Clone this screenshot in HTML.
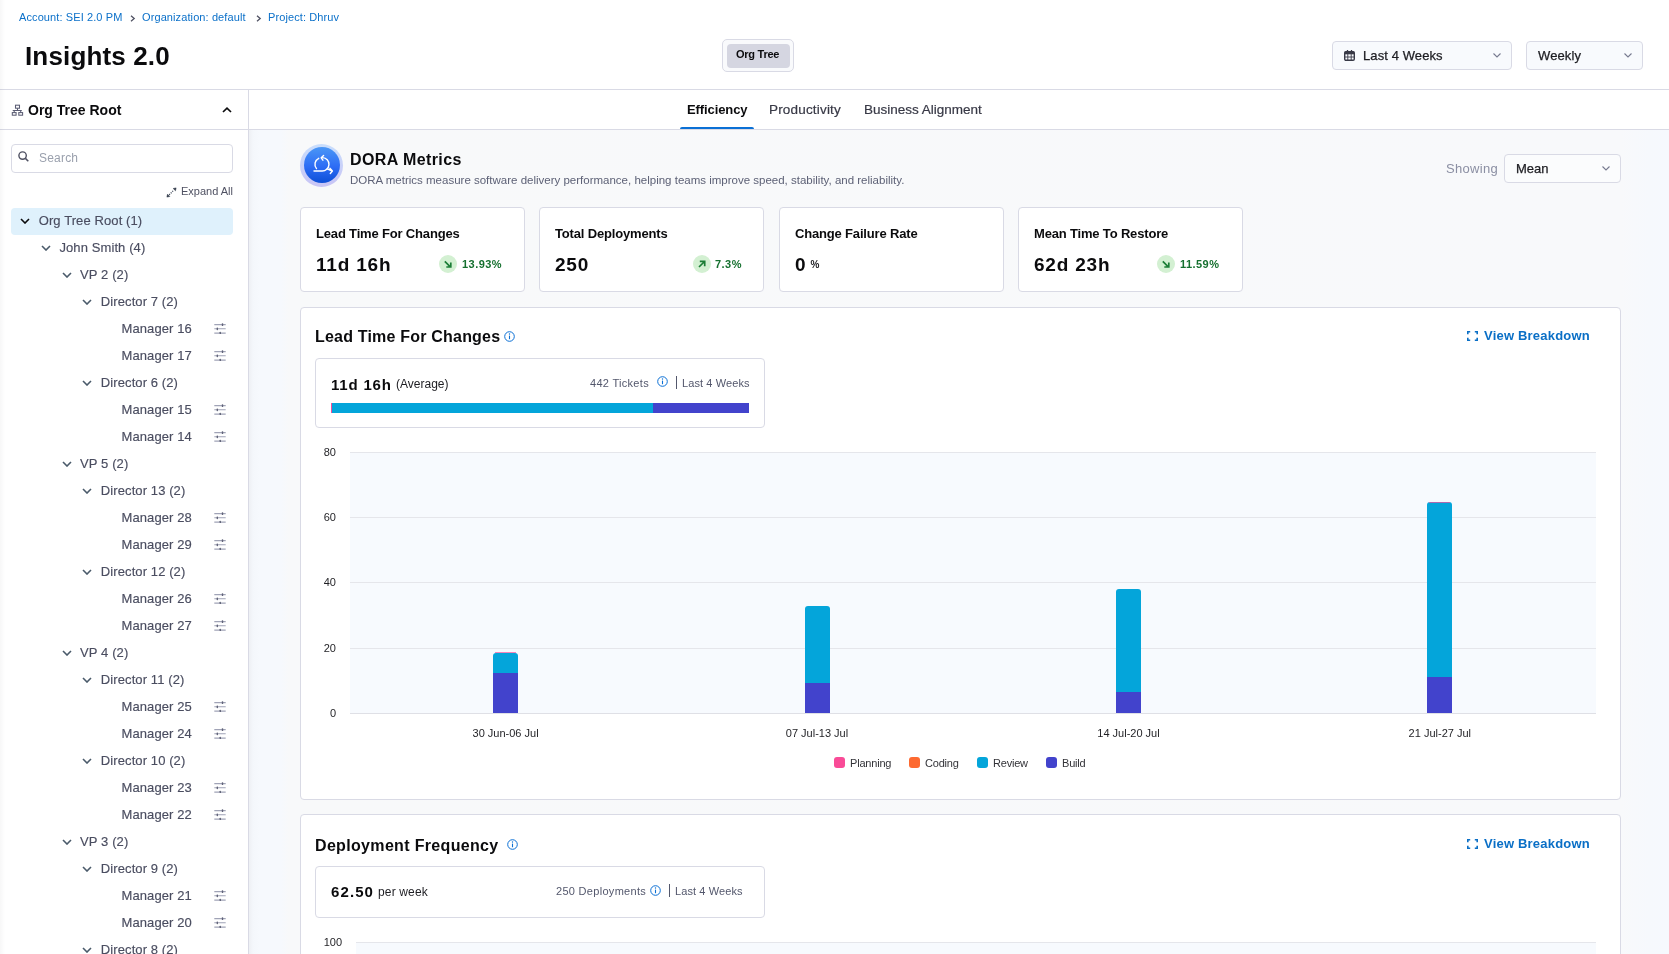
<!DOCTYPE html>
<html><head><meta charset="utf-8">
<style>
*{box-sizing:border-box;margin:0;padding:0}
html{width:1669px;height:954px;overflow:hidden;background:#fff}
body{will-change:transform;width:1669px;height:954px;overflow:hidden;background:#fff;font-family:"Liberation Sans",sans-serif;color:#0b0b0d}
.a{position:absolute;white-space:nowrap}
.bc{font-size:11px;color:#0b70c9;top:11px;letter-spacing:.1px}
.hl{position:absolute;left:0;width:1669px;height:1px;background:#d9dae5}
#side{position:absolute;left:0;top:90px;width:249px;height:864px;border-right:1px solid #d9dae5;background:#fff;overflow:hidden}
.tr{position:absolute;font-size:13px;color:#4a4d60;-webkit-text-stroke:.15px #4a4d60;height:27px;line-height:27px;white-space:nowrap}
.chev{position:absolute;top:11px;width:10px;height:6px}
.sl{position:absolute;left:214px;width:12px;height:11px}
#main{position:absolute;left:249px;top:130px;width:1420px;height:824px;background:linear-gradient(90deg,#eef0f4 0px,#f4f7fb 4px,#f6f9fd 10px,#f6f9fd 32px,#f8f9fa 40px,#f8f9fb 1372px,#f6f9fd 1400px,#f6f9fe 1420px)}
.card{position:absolute;background:#fff;border:1px solid #d9dae5;border-radius:4px}
.mc-t{position:absolute;left:15px;top:18px;font-size:13px;font-weight:bold;color:#0b0b0d;letter-spacing:-.17px}
.mc-v{position:absolute;left:15px;top:46px;font-size:19px;font-weight:bold;color:#0b0b0d;letter-spacing:.8px}
.badge{position:absolute;top:47px;width:18px;height:18px;border-radius:50%;background:#d3f0d2}
.pct{position:absolute;top:49.5px;font-size:11px;font-weight:bold;color:#15702f;letter-spacing:.45px}
.ctitle{position:absolute;font-size:16px;font-weight:bold;color:#0b0b0d;letter-spacing:.2px}
.vb{position:absolute;font-size:13px;font-weight:bold;color:#0a6fc6;letter-spacing:.2px}
.grey11{font-size:11px;color:#53576c;letter-spacing:.3px}
.ylab{position:absolute;font-size:11px;color:#1f1f23;text-align:right;width:30px}
.xlab{position:absolute;font-size:11px;color:#1f1f23;text-align:center;width:120px}
.grid{position:absolute;height:1px;background:#e5e6eb}
.lg{position:absolute;top:757px;width:11px;height:11px;border-radius:3px}
.lgt{position:absolute;top:757px;font-size:11px;color:#333338;letter-spacing:-.2px}
</style></head><body>
<!-- ===== header ===== -->
<div class="a bc" style="left:19px">Account: SEI 2.0 PM</div>
<svg class="a" style="left:130px;top:15px" width="6" height="7" viewBox="0 0 6 7"><path d="M1 0.8L4.2 3.5L1 6.2" fill="none" stroke="#4f5162" stroke-width="1.3"/></svg>
<div class="a bc" style="left:142px">Organization: default</div>
<svg class="a" style="left:256px;top:15px" width="6" height="7" viewBox="0 0 6 7"><path d="M1 0.8L4.2 3.5L1 6.2" fill="none" stroke="#4f5162" stroke-width="1.3"/></svg>
<div class="a bc" style="left:268px">Project: Dhruv</div>
<div class="a" style="left:25px;top:41px;font-size:26px;font-weight:bold;color:#0b0b0d;letter-spacing:.15px">Insights 2.0</div>

<div class="a" style="left:722px;top:39px;width:72px;height:33px;border:1px solid #d9dae5;border-radius:5px;background:#f9fafc"></div>
<div class="a" style="left:727px;top:44px;width:63px;height:24px;border-radius:4px;background:#d5d6e1"></div>
<div class="a" style="left:736px;top:48px;font-size:11px;font-weight:bold;color:#0b0b0d;letter-spacing:-.25px">Org Tree</div>

<div class="a" style="left:1332px;top:41px;width:180px;height:29px;border:1px solid #d9dae5;border-radius:4px;background:#f8fafd"></div>
<svg class="a" style="left:1344px;top:50px" width="11" height="11" viewBox="0 0 11 11"><rect x="0.7" y="1.7" width="9.6" height="8.6" rx="1.2" fill="none" stroke="#383946" stroke-width="1.4"/><rect x="0.7" y="1.7" width="9.6" height="2.6" fill="#383946"/><path d="M3.5 0v2.5M7.5 0v2.5" stroke="#383946" stroke-width="1.3"/><path d="M0.7 7H10.3M3.8 4V10M7.2 4V10" stroke="#383946" stroke-width="0.9"/></svg>
<div class="a" style="left:1363px;top:48px;font-size:13px;color:#1d1d22;letter-spacing:.1px;-webkit-text-stroke:.25px #1d1d22">Last 4 Weeks</div>
<svg class="a" style="left:1493px;top:53px" width="8" height="5" viewBox="0 0 8 5"><path d="M0.5 0.5L4 4L7.5 0.5" fill="none" stroke="#777a8f" stroke-width="1.1"/></svg>

<div class="a" style="left:1526px;top:41px;width:117px;height:29px;border:1px solid #d9dae5;border-radius:4px;background:#f8fafd"></div>
<div class="a" style="left:1538px;top:48px;font-size:13px;color:#1d1d22;letter-spacing:.1px;-webkit-text-stroke:.25px #1d1d22">Weekly</div>
<svg class="a" style="left:1624px;top:53px" width="8" height="5" viewBox="0 0 8 5"><path d="M0.5 0.5L4 4L7.5 0.5" fill="none" stroke="#777a8f" stroke-width="1.1"/></svg>

<div class="hl" style="top:89px"></div>

<!-- ===== sidebar ===== -->
<div id="side">
  <svg style="position:absolute;left:11px;top:14px" width="13" height="12" viewBox="0 0 13 12"><g fill="none" stroke="#5a5c73" stroke-width="1.05"><rect x="4.5" y="1.2" width="4" height="3"/><rect x="1.3" y="8.6" width="3.8" height="2.6"/><rect x="7.8" y="8.6" width="3.8" height="2.6"/><path d="M6.5 4.2V6.4M1.7 6.4H10.8M3.2 6.4V8.6M9.7 6.4V8.6"/></g></svg>
  <div style="position:absolute;left:28px;top:12px;font-size:14px;font-weight:bold;color:#0b0b0d;white-space:nowrap">Org Tree Root</div>
  <svg style="position:absolute;left:222px;top:17px" width="10" height="6" viewBox="0 0 10 6"><path d="M1 5L5 1.2L9 5" fill="none" stroke="#0b0b0d" stroke-width="1.7"/></svg>
  <div style="position:absolute;left:0;top:39px;width:249px;height:1px;background:#d9dae5"></div>
  <div style="position:absolute;left:11px;top:54px;width:222px;height:29px;border:1px solid #d9dae5;border-radius:4px;background:#fff"></div>
  <svg style="position:absolute;left:18px;top:61px" width="11" height="11" viewBox="0 0 11 11"><circle cx="4.6" cy="4.6" r="3.7" fill="none" stroke="#4f5162" stroke-width="1.4"/><path d="M7.4 7.4L10.3 10.3" stroke="#4f5162" stroke-width="1.5"/></svg>
  <div style="position:absolute;left:39px;top:61px;font-size:12px;color:#9aa0ad;letter-spacing:.2px">Search</div>
  <svg style="position:absolute;left:166px;top:97px" width="11" height="11" viewBox="0 0 11 11"><path d="M3.2 7.8L7.8 3.2" stroke="#3b4454" stroke-width="1.2" stroke-dasharray="1.1 1.1"/><path d="M10.1 0.9L7.2 1.5L9.5 3.8Z M0.9 10.1L1.5 7.2L3.8 9.5Z" fill="#2b3444" stroke="#2b3444" stroke-width=".5" stroke-linejoin="round"/></svg>
  <div style="position:absolute;left:181px;top:95px;font-size:11px;color:#4f5162;white-space:nowrap">Expand All</div>
<div style="position:absolute;left:11px;top:118px;width:222px;height:26.5px;background:#dff1fc;border-radius:4px"></div><div class="tr" style="left:0;top:117px;width:248px"><svg class="chev" style="left:20.2px" viewBox="0 0 10 6"><path d="M1 1L5 5L9 1" fill="none" stroke="#0b0b0d" stroke-width="1.6"/></svg><span style="position:absolute;left:38.7px;top:0;letter-spacing:.1px">Org Tree Root (1)</span></div>
<div class="tr" style="left:0;top:144px;width:248px"><svg class="chev" style="left:40.9px" viewBox="0 0 10 6"><path d="M1 1L5 5L9 1" fill="none" stroke="#4a5a6a" stroke-width="1.6"/></svg><span style="position:absolute;left:59.4px;top:0;letter-spacing:.1px">John Smith (4)</span></div>
<div class="tr" style="left:0;top:171px;width:248px"><svg class="chev" style="left:61.6px" viewBox="0 0 10 6"><path d="M1 1L5 5L9 1" fill="none" stroke="#4a5a6a" stroke-width="1.6"/></svg><span style="position:absolute;left:80.1px;top:0;letter-spacing:.1px">VP 2 (2)</span></div>
<div class="tr" style="left:0;top:198px;width:248px"><svg class="chev" style="left:82.3px" viewBox="0 0 10 6"><path d="M1 1L5 5L9 1" fill="none" stroke="#4a5a6a" stroke-width="1.6"/></svg><span style="position:absolute;left:100.8px;top:0;letter-spacing:.1px">Director 7 (2)</span></div>
<div class="tr" style="left:0;top:225px;width:248px"><span style="position:absolute;left:121.5px;top:0;letter-spacing:.1px">Manager 16</span><svg class="sl" style="top:8px" viewBox="0 0 12 11"><g stroke="#a0a3b6" stroke-width="1.1" fill="none"><path d="M0.3 1.6H11.7M0.3 5.8H11.7M0.3 10.1H11.7"/></g><g fill="#616479"><rect x="7.8" y="0.2" width="1.4" height="2.8" rx=".6"/><rect x="2.6" y="4.4" width="1.4" height="2.8" rx=".6"/><rect x="5.6" y="8.7" width="1.4" height="2.8" rx=".6"/></g></svg></div>
<div class="tr" style="left:0;top:252px;width:248px"><span style="position:absolute;left:121.5px;top:0;letter-spacing:.1px">Manager 17</span><svg class="sl" style="top:8px" viewBox="0 0 12 11"><g stroke="#a0a3b6" stroke-width="1.1" fill="none"><path d="M0.3 1.6H11.7M0.3 5.8H11.7M0.3 10.1H11.7"/></g><g fill="#616479"><rect x="7.8" y="0.2" width="1.4" height="2.8" rx=".6"/><rect x="2.6" y="4.4" width="1.4" height="2.8" rx=".6"/><rect x="5.6" y="8.7" width="1.4" height="2.8" rx=".6"/></g></svg></div>
<div class="tr" style="left:0;top:279px;width:248px"><svg class="chev" style="left:82.3px" viewBox="0 0 10 6"><path d="M1 1L5 5L9 1" fill="none" stroke="#4a5a6a" stroke-width="1.6"/></svg><span style="position:absolute;left:100.8px;top:0;letter-spacing:.1px">Director 6 (2)</span></div>
<div class="tr" style="left:0;top:306px;width:248px"><span style="position:absolute;left:121.5px;top:0;letter-spacing:.1px">Manager 15</span><svg class="sl" style="top:8px" viewBox="0 0 12 11"><g stroke="#a0a3b6" stroke-width="1.1" fill="none"><path d="M0.3 1.6H11.7M0.3 5.8H11.7M0.3 10.1H11.7"/></g><g fill="#616479"><rect x="7.8" y="0.2" width="1.4" height="2.8" rx=".6"/><rect x="2.6" y="4.4" width="1.4" height="2.8" rx=".6"/><rect x="5.6" y="8.7" width="1.4" height="2.8" rx=".6"/></g></svg></div>
<div class="tr" style="left:0;top:333px;width:248px"><span style="position:absolute;left:121.5px;top:0;letter-spacing:.1px">Manager 14</span><svg class="sl" style="top:8px" viewBox="0 0 12 11"><g stroke="#a0a3b6" stroke-width="1.1" fill="none"><path d="M0.3 1.6H11.7M0.3 5.8H11.7M0.3 10.1H11.7"/></g><g fill="#616479"><rect x="7.8" y="0.2" width="1.4" height="2.8" rx=".6"/><rect x="2.6" y="4.4" width="1.4" height="2.8" rx=".6"/><rect x="5.6" y="8.7" width="1.4" height="2.8" rx=".6"/></g></svg></div>
<div class="tr" style="left:0;top:360px;width:248px"><svg class="chev" style="left:61.6px" viewBox="0 0 10 6"><path d="M1 1L5 5L9 1" fill="none" stroke="#4a5a6a" stroke-width="1.6"/></svg><span style="position:absolute;left:80.1px;top:0;letter-spacing:.1px">VP 5 (2)</span></div>
<div class="tr" style="left:0;top:387px;width:248px"><svg class="chev" style="left:82.3px" viewBox="0 0 10 6"><path d="M1 1L5 5L9 1" fill="none" stroke="#4a5a6a" stroke-width="1.6"/></svg><span style="position:absolute;left:100.8px;top:0;letter-spacing:.1px">Director 13 (2)</span></div>
<div class="tr" style="left:0;top:414px;width:248px"><span style="position:absolute;left:121.5px;top:0;letter-spacing:.1px">Manager 28</span><svg class="sl" style="top:8px" viewBox="0 0 12 11"><g stroke="#a0a3b6" stroke-width="1.1" fill="none"><path d="M0.3 1.6H11.7M0.3 5.8H11.7M0.3 10.1H11.7"/></g><g fill="#616479"><rect x="7.8" y="0.2" width="1.4" height="2.8" rx=".6"/><rect x="2.6" y="4.4" width="1.4" height="2.8" rx=".6"/><rect x="5.6" y="8.7" width="1.4" height="2.8" rx=".6"/></g></svg></div>
<div class="tr" style="left:0;top:441px;width:248px"><span style="position:absolute;left:121.5px;top:0;letter-spacing:.1px">Manager 29</span><svg class="sl" style="top:8px" viewBox="0 0 12 11"><g stroke="#a0a3b6" stroke-width="1.1" fill="none"><path d="M0.3 1.6H11.7M0.3 5.8H11.7M0.3 10.1H11.7"/></g><g fill="#616479"><rect x="7.8" y="0.2" width="1.4" height="2.8" rx=".6"/><rect x="2.6" y="4.4" width="1.4" height="2.8" rx=".6"/><rect x="5.6" y="8.7" width="1.4" height="2.8" rx=".6"/></g></svg></div>
<div class="tr" style="left:0;top:468px;width:248px"><svg class="chev" style="left:82.3px" viewBox="0 0 10 6"><path d="M1 1L5 5L9 1" fill="none" stroke="#4a5a6a" stroke-width="1.6"/></svg><span style="position:absolute;left:100.8px;top:0;letter-spacing:.1px">Director 12 (2)</span></div>
<div class="tr" style="left:0;top:495px;width:248px"><span style="position:absolute;left:121.5px;top:0;letter-spacing:.1px">Manager 26</span><svg class="sl" style="top:8px" viewBox="0 0 12 11"><g stroke="#a0a3b6" stroke-width="1.1" fill="none"><path d="M0.3 1.6H11.7M0.3 5.8H11.7M0.3 10.1H11.7"/></g><g fill="#616479"><rect x="7.8" y="0.2" width="1.4" height="2.8" rx=".6"/><rect x="2.6" y="4.4" width="1.4" height="2.8" rx=".6"/><rect x="5.6" y="8.7" width="1.4" height="2.8" rx=".6"/></g></svg></div>
<div class="tr" style="left:0;top:522px;width:248px"><span style="position:absolute;left:121.5px;top:0;letter-spacing:.1px">Manager 27</span><svg class="sl" style="top:8px" viewBox="0 0 12 11"><g stroke="#a0a3b6" stroke-width="1.1" fill="none"><path d="M0.3 1.6H11.7M0.3 5.8H11.7M0.3 10.1H11.7"/></g><g fill="#616479"><rect x="7.8" y="0.2" width="1.4" height="2.8" rx=".6"/><rect x="2.6" y="4.4" width="1.4" height="2.8" rx=".6"/><rect x="5.6" y="8.7" width="1.4" height="2.8" rx=".6"/></g></svg></div>
<div class="tr" style="left:0;top:549px;width:248px"><svg class="chev" style="left:61.6px" viewBox="0 0 10 6"><path d="M1 1L5 5L9 1" fill="none" stroke="#4a5a6a" stroke-width="1.6"/></svg><span style="position:absolute;left:80.1px;top:0;letter-spacing:.1px">VP 4 (2)</span></div>
<div class="tr" style="left:0;top:576px;width:248px"><svg class="chev" style="left:82.3px" viewBox="0 0 10 6"><path d="M1 1L5 5L9 1" fill="none" stroke="#4a5a6a" stroke-width="1.6"/></svg><span style="position:absolute;left:100.8px;top:0;letter-spacing:.1px">Director 11 (2)</span></div>
<div class="tr" style="left:0;top:603px;width:248px"><span style="position:absolute;left:121.5px;top:0;letter-spacing:.1px">Manager 25</span><svg class="sl" style="top:8px" viewBox="0 0 12 11"><g stroke="#a0a3b6" stroke-width="1.1" fill="none"><path d="M0.3 1.6H11.7M0.3 5.8H11.7M0.3 10.1H11.7"/></g><g fill="#616479"><rect x="7.8" y="0.2" width="1.4" height="2.8" rx=".6"/><rect x="2.6" y="4.4" width="1.4" height="2.8" rx=".6"/><rect x="5.6" y="8.7" width="1.4" height="2.8" rx=".6"/></g></svg></div>
<div class="tr" style="left:0;top:630px;width:248px"><span style="position:absolute;left:121.5px;top:0;letter-spacing:.1px">Manager 24</span><svg class="sl" style="top:8px" viewBox="0 0 12 11"><g stroke="#a0a3b6" stroke-width="1.1" fill="none"><path d="M0.3 1.6H11.7M0.3 5.8H11.7M0.3 10.1H11.7"/></g><g fill="#616479"><rect x="7.8" y="0.2" width="1.4" height="2.8" rx=".6"/><rect x="2.6" y="4.4" width="1.4" height="2.8" rx=".6"/><rect x="5.6" y="8.7" width="1.4" height="2.8" rx=".6"/></g></svg></div>
<div class="tr" style="left:0;top:657px;width:248px"><svg class="chev" style="left:82.3px" viewBox="0 0 10 6"><path d="M1 1L5 5L9 1" fill="none" stroke="#4a5a6a" stroke-width="1.6"/></svg><span style="position:absolute;left:100.8px;top:0;letter-spacing:.1px">Director 10 (2)</span></div>
<div class="tr" style="left:0;top:684px;width:248px"><span style="position:absolute;left:121.5px;top:0;letter-spacing:.1px">Manager 23</span><svg class="sl" style="top:8px" viewBox="0 0 12 11"><g stroke="#a0a3b6" stroke-width="1.1" fill="none"><path d="M0.3 1.6H11.7M0.3 5.8H11.7M0.3 10.1H11.7"/></g><g fill="#616479"><rect x="7.8" y="0.2" width="1.4" height="2.8" rx=".6"/><rect x="2.6" y="4.4" width="1.4" height="2.8" rx=".6"/><rect x="5.6" y="8.7" width="1.4" height="2.8" rx=".6"/></g></svg></div>
<div class="tr" style="left:0;top:711px;width:248px"><span style="position:absolute;left:121.5px;top:0;letter-spacing:.1px">Manager 22</span><svg class="sl" style="top:8px" viewBox="0 0 12 11"><g stroke="#a0a3b6" stroke-width="1.1" fill="none"><path d="M0.3 1.6H11.7M0.3 5.8H11.7M0.3 10.1H11.7"/></g><g fill="#616479"><rect x="7.8" y="0.2" width="1.4" height="2.8" rx=".6"/><rect x="2.6" y="4.4" width="1.4" height="2.8" rx=".6"/><rect x="5.6" y="8.7" width="1.4" height="2.8" rx=".6"/></g></svg></div>
<div class="tr" style="left:0;top:738px;width:248px"><svg class="chev" style="left:61.6px" viewBox="0 0 10 6"><path d="M1 1L5 5L9 1" fill="none" stroke="#4a5a6a" stroke-width="1.6"/></svg><span style="position:absolute;left:80.1px;top:0;letter-spacing:.1px">VP 3 (2)</span></div>
<div class="tr" style="left:0;top:765px;width:248px"><svg class="chev" style="left:82.3px" viewBox="0 0 10 6"><path d="M1 1L5 5L9 1" fill="none" stroke="#4a5a6a" stroke-width="1.6"/></svg><span style="position:absolute;left:100.8px;top:0;letter-spacing:.1px">Director 9 (2)</span></div>
<div class="tr" style="left:0;top:792px;width:248px"><span style="position:absolute;left:121.5px;top:0;letter-spacing:.1px">Manager 21</span><svg class="sl" style="top:8px" viewBox="0 0 12 11"><g stroke="#a0a3b6" stroke-width="1.1" fill="none"><path d="M0.3 1.6H11.7M0.3 5.8H11.7M0.3 10.1H11.7"/></g><g fill="#616479"><rect x="7.8" y="0.2" width="1.4" height="2.8" rx=".6"/><rect x="2.6" y="4.4" width="1.4" height="2.8" rx=".6"/><rect x="5.6" y="8.7" width="1.4" height="2.8" rx=".6"/></g></svg></div>
<div class="tr" style="left:0;top:819px;width:248px"><span style="position:absolute;left:121.5px;top:0;letter-spacing:.1px">Manager 20</span><svg class="sl" style="top:8px" viewBox="0 0 12 11"><g stroke="#a0a3b6" stroke-width="1.1" fill="none"><path d="M0.3 1.6H11.7M0.3 5.8H11.7M0.3 10.1H11.7"/></g><g fill="#616479"><rect x="7.8" y="0.2" width="1.4" height="2.8" rx=".6"/><rect x="2.6" y="4.4" width="1.4" height="2.8" rx=".6"/><rect x="5.6" y="8.7" width="1.4" height="2.8" rx=".6"/></g></svg></div>
<div class="tr" style="left:0;top:846px;width:248px"><svg class="chev" style="left:82.3px" viewBox="0 0 10 6"><path d="M1 1L5 5L9 1" fill="none" stroke="#4a5a6a" stroke-width="1.6"/></svg><span style="position:absolute;left:100.8px;top:0;letter-spacing:.1px">Director 8 (2)</span></div>
</div>

<!-- ===== tabs ===== -->
<div class="a" style="left:687px;top:102px;font-size:13px;font-weight:bold;color:#0b0b0d;letter-spacing:-.1px">Efficiency</div>
<div class="a" style="left:769px;top:101.5px;font-size:13.5px;color:#383946;letter-spacing:.18px;-webkit-text-stroke:.2px #383946">Productivity</div>
<div class="a" style="left:864px;top:102px;font-size:13.5px;color:#383946;letter-spacing:0;-webkit-text-stroke:.2px #383946">Business Alignment</div>
<div class="a" style="left:680px;top:127px;width:74px;height:2px;background:#0b70d5;border-radius:2px 2px 0 0"></div>
<div class="a" style="left:249px;top:129px;width:1420px;height:1px;background:#d9dae5"></div>

<!-- ===== main ===== -->
<div id="main"></div>

<!-- DORA header -->
<div class="a" style="left:300px;top:144px;width:43px;height:43px;border-radius:50%;background:linear-gradient(180deg,#c9defc,#c8c4f5)"></div>
<div class="a" style="left:304px;top:147px;width:36px;height:36px;border-radius:50%;background:linear-gradient(180deg,#4a97f6 0%,#2d6cf5 55%,#0d4fd6 100%)"></div>
<svg class="a" style="left:310px;top:152px" width="26" height="24" viewBox="0 0 26 24"><g fill="none" stroke="#fff" stroke-width="1.4" stroke-linecap="round" stroke-linejoin="round"><path d="M8.7 6.3A6.7 6.7 0 0 0 6.5 16.6"/><path d="M12.6 5.6A6.7 6.7 0 0 1 11.9 19H4"/><path d="M13.6 3.4L11.2 5.8L12.9 8.2"/><path d="M17.2 16.8L22.3 19M19.9 16.3L22.4 19L20.3 21.5"/></g></svg>
<div class="a" style="left:350px;top:151px;font-size:16px;font-weight:bold;color:#0b0b0d;letter-spacing:.4px">DORA Metrics</div>
<div class="a" style="left:350px;top:174px;font-size:11.5px;color:#5d6176">DORA metrics measure software delivery performance, helping teams improve speed, stability, and reliability.</div>

<div class="a" style="left:1446px;top:161px;font-size:13px;color:#8b8fa3;letter-spacing:.3px">Showing</div>
<div class="a" style="left:1504px;top:154px;width:117px;height:29px;border:1px solid #d9dae5;border-radius:4px;background:#fbfcfd"></div>
<div class="a" style="left:1516px;top:161px;font-size:13px;color:#1d1d22;-webkit-text-stroke:.25px #1d1d22">Mean</div>
<svg class="a" style="left:1602px;top:166px" width="8" height="5" viewBox="0 0 8 5"><path d="M0.5 0.5L4 4L7.5 0.5" fill="none" stroke="#777a8f" stroke-width="1.1"/></svg>

<!-- metric cards -->
<div class="card" style="left:300px;top:207px;width:225px;height:85px">
  <div class="mc-t">Lead Time For Changes</div>
  <div class="mc-v">11d 16h</div>
  <div class="badge" style="left:138px"><svg width="18" height="18" viewBox="0 0 18 18"><path d="M5.8 6.3L11.3 11.8M7.3 12H11.8V7.5" fill="none" stroke="#1b7d36" stroke-width="1.7"/></svg></div>
  <div class="pct" style="left:161px">13.93%</div>
</div>
<div class="card" style="left:539px;top:207px;width:225px;height:85px">
  <div class="mc-t">Total Deployments</div>
  <div class="mc-v">250</div>
  <div class="badge" style="left:153px"><svg width="18" height="18" viewBox="0 0 18 18"><path d="M6 12L11.5 6.5M6.8 6.3H11.7V11.2" fill="none" stroke="#1b7d36" stroke-width="1.7"/></svg></div>
  <div class="pct" style="left:175px">7.3%</div>
</div>
<div class="card" style="left:779px;top:207px;width:225px;height:85px">
  <div class="mc-t">Change Failure Rate</div>
  <div class="mc-v">0</div>
  <div style="position:absolute;left:30.5px;top:50.5px;font-size:10px;font-weight:bold;color:#1d1d22">%</div>
</div>
<div class="card" style="left:1018px;top:207px;width:225px;height:85px">
  <div class="mc-t">Mean Time To Restore</div>
  <div class="mc-v">62d 23h</div>
  <div class="badge" style="left:138px"><svg width="18" height="18" viewBox="0 0 18 18"><path d="M5.8 6.3L11.3 11.8M7.3 12H11.8V7.5" fill="none" stroke="#1b7d36" stroke-width="1.7"/></svg></div>
  <div class="pct" style="left:161px">11.59%</div>
</div>

<!-- Lead time card -->
<div class="card" style="left:300px;top:307px;width:1321px;height:493px"></div>
<div class="ctitle" style="left:315px;top:328px">Lead Time For Changes</div>
<svg class="a" style="left:504px;top:331px" width="11" height="11" viewBox="0 0 11 11"><circle cx="5.5" cy="5.5" r="4.8" fill="none" stroke="#0b70d5" stroke-width="1"/><path d="M5.5 4.6V8.2" stroke="#0b70d5" stroke-width="1.1"/><circle cx="5.5" cy="3" r=".7" fill="#0b70d5"/></svg>
<svg class="a" style="left:1467px;top:331px" width="11" height="10" viewBox="0 0 11 10"><path d="M0.8 3.2V0.8H3.2M7.8 0.8H10.2V3.2M10.2 6.8V9.2H7.8M3.2 9.2H0.8V6.8" fill="none" stroke="#0a6fc6" stroke-width="1.6"/></svg>
<div class="vb" style="left:1484px;top:328px">View Breakdown</div>

<div class="card" style="left:315px;top:358px;width:450px;height:70px"></div>
<div class="a" style="left:331px;top:376px;font-size:15px;font-weight:bold;color:#0b0b0d;letter-spacing:.8px">11d 16h</div>
<div class="a" style="left:396px;top:377px;font-size:12px;color:#1d1d22">(Average)</div>
<div class="a grey11" style="left:590px;top:377px">442 Tickets</div>
<svg class="a" style="left:657px;top:376px" width="11" height="11" viewBox="0 0 11 11"><circle cx="5.5" cy="5.5" r="4.8" fill="none" stroke="#0b70d5" stroke-width="1"/><path d="M5.5 4.6V8.2" stroke="#0b70d5" stroke-width="1.1"/><circle cx="5.5" cy="3" r=".7" fill="#0b70d5"/></svg>
<div class="a" style="left:676px;top:376px;width:1px;height:13px;background:#53576c"></div>
<div class="a grey11" style="left:682px;top:377px;letter-spacing:.1px">Last 4 Weeks</div>
<div class="a" style="left:331px;top:403px;width:1px;height:10px;background:#f3519d"></div>
<div class="a" style="left:332px;top:403px;width:321px;height:10px;background:#04a5da"></div>
<div class="a" style="left:653px;top:403px;width:96px;height:10px;background:#4243cc"></div>

<!-- chart -->
<div class="a" style="left:350px;top:452px;width:1246px;height:261px;background:#f7fafe"></div>
<div class="grid" style="left:350px;top:452px;width:1246px"></div>
<div class="grid" style="left:350px;top:517px;width:1246px"></div>
<div class="grid" style="left:350px;top:582px;width:1246px"></div>
<div class="grid" style="left:350px;top:648px;width:1246px"></div>
<div class="grid" style="left:350px;top:713px;width:1246px;background:#dfe0e6"></div>
<div class="ylab" style="left:306px;top:446px">80</div>
<div class="ylab" style="left:306px;top:511px">60</div>
<div class="ylab" style="left:306px;top:576px">40</div>
<div class="ylab" style="left:306px;top:642px">20</div>
<div class="ylab" style="left:306px;top:707px">0</div>
<div style="position:absolute;left:493.1px;top:652.9px;width:25px;height:20.5px;background:#04a5da;border-radius:3px 3px 0 0"></div><div style="position:absolute;left:493.1px;top:673.4px;width:25px;height:39.9px;background:#4243cc"></div><div style="position:absolute;left:495.1px;top:652.4px;width:21px;height:1px;background:#f3519d;opacity:.7"></div><div style="position:absolute;left:804.5px;top:606.1px;width:25px;height:77.1px;background:#04a5da;border-radius:3px 3px 0 0"></div><div style="position:absolute;left:804.5px;top:683.2px;width:25px;height:30.1px;background:#4243cc"></div><div style="position:absolute;left:1116.0px;top:588.6px;width:25px;height:103.7px;background:#04a5da;border-radius:3px 3px 0 0"></div><div style="position:absolute;left:1116.0px;top:692.3px;width:25px;height:21.0px;background:#4243cc"></div><div style="position:absolute;left:1427.3px;top:502.0px;width:25px;height:174.8px;background:#04a5da;border-radius:3px 3px 0 0"></div><div style="position:absolute;left:1427.3px;top:676.8px;width:25px;height:36.5px;background:#4243cc"></div><div style="position:absolute;left:1429.3px;top:501.5px;width:21px;height:1px;background:#f3519d;opacity:.7"></div>
<div class="xlab" style="left:445.6px;top:727px">30 Jun-06 Jul</div>
<div class="xlab" style="left:757px;top:727px">07 Jul-13 Jul</div>
<div class="xlab" style="left:1068.5px;top:727px">14 Jul-20 Jul</div>
<div class="xlab" style="left:1379.8px;top:727px">21 Jul-27 Jul</div>

<div class="lg" style="left:834px;background:#f94b97"></div><div class="lgt" style="left:850px">Planning</div>
<div class="lg" style="left:909px;background:#fd6a31"></div><div class="lgt" style="left:925px">Coding</div>
<div class="lg" style="left:977px;background:#04a5da"></div><div class="lgt" style="left:993px">Review</div>
<div class="lg" style="left:1046px;background:#4243cc"></div><div class="lgt" style="left:1062px">Build</div>

<!-- Deployment frequency card -->
<div class="card" style="left:300px;top:814px;width:1321px;height:200px"></div>
<div class="ctitle" style="left:315px;top:837px;letter-spacing:.33px">Deployment Frequency</div>
<svg class="a" style="left:507px;top:839px" width="11" height="11" viewBox="0 0 11 11"><circle cx="5.5" cy="5.5" r="4.8" fill="none" stroke="#0b70d5" stroke-width="1"/><path d="M5.5 4.6V8.2" stroke="#0b70d5" stroke-width="1.1"/><circle cx="5.5" cy="3" r=".7" fill="#0b70d5"/></svg>
<svg class="a" style="left:1467px;top:839px" width="11" height="10" viewBox="0 0 11 10"><path d="M0.8 3.2V0.8H3.2M7.8 0.8H10.2V3.2M10.2 6.8V9.2H7.8M3.2 9.2H0.8V6.8" fill="none" stroke="#0a6fc6" stroke-width="1.6"/></svg>
<div class="vb" style="left:1484px;top:836px">View Breakdown</div>

<div class="card" style="left:315px;top:866px;width:450px;height:52px"></div>
<div class="a" style="left:331px;top:883px;font-size:15px;font-weight:bold;color:#0b0b0d;letter-spacing:1.1px">62.50</div>
<div class="a" style="left:378px;top:885px;font-size:12px;color:#1d1d22;letter-spacing:.15px">per week</div>
<div class="a grey11" style="left:556px;top:885px">250 Deployments</div>
<svg class="a" style="left:650px;top:884.5px" width="11" height="11" viewBox="0 0 11 11"><circle cx="5.5" cy="5.5" r="4.8" fill="none" stroke="#0b70d5" stroke-width="1"/><path d="M5.5 4.6V8.2" stroke="#0b70d5" stroke-width="1.1"/><circle cx="5.5" cy="3" r=".7" fill="#0b70d5"/></svg>
<div class="a" style="left:669px;top:884px;width:1px;height:13px;background:#53576c"></div>
<div class="a grey11" style="left:675px;top:885px;letter-spacing:.1px">Last 4 Weeks</div>
<div class="a" style="left:356px;top:942px;width:1240px;height:20px;background:#f7fafe"></div>
<div class="grid" style="left:356px;top:942px;width:1240px"></div>
<div class="ylab" style="left:312px;top:936px">100</div>
<div class="a" style="left:0;top:0;width:5px;height:954px;background:linear-gradient(90deg,rgba(0,0,20,.03),rgba(0,0,20,0))"></div>
</body></html>
